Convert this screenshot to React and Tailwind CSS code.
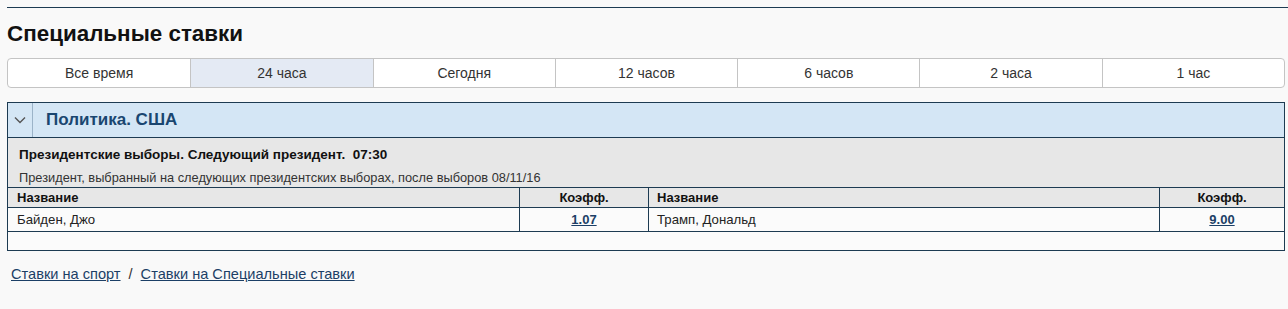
export default function App() {
  const tabs = ["Все время", "24 часа", "Сегодня", "12 часов", "6 часов", "2 часа", "1 час"];
  return (
    <div className="min-h-[309px] bg-[#f9f9f9] pt-[7px] pl-[7px] pr-[3px] text-[#222]" style={{ fontFamily: '"Liberation Sans", Arial, sans-serif' }}>
      <div className="h-px bg-[#1d3b52] -mr-[3px]"></div>
      <h1 className="mt-[13px] text-[22.4px] font-bold leading-[26px] text-[#111]">Специальные ставки</h1>
      <div className="mt-[11px] grid grid-cols-7 rounded-[4px] border border-[#c4c4c4] bg-white h-[30px] overflow-hidden">
        {tabs.map((t, i) => (
          <div key={t} className={`flex items-center justify-center text-[14px] text-[#333] ${i > 0 ? "border-l border-[#c4c4c4]" : ""} ${i === 1 ? "bg-[#e4eaf4]" : ""}`}>
            {t}
          </div>
        ))}
      </div>
      <div className="mt-[14px] border border-[#1d3b52]">
        <div className="flex h-[35px] bg-[#d4e6f5] border-b border-[#1d3b52]">
          <div className="w-[25px] flex items-center justify-center border-r border-[#9bb3c8]">
            <svg width="12" height="8" viewBox="0 0 12 8" fill="none" stroke="#555" strokeWidth="1.4">
              <path d="M1 1.5 L6 6.5 L11 1.5" />
            </svg>
          </div>
          <div className="flex items-center pl-[13px] text-[17px] font-bold text-[#1a4670]">Политика. США</div>
        </div>
        <div className="bg-[#e7e7e7] px-[11px] pt-[8px] h-[50px] border-b border-[#1d3b52]">
          <div className="text-[13.5px] font-bold leading-[18px] text-[#111]">Президентские выборы. Следующий президент.&nbsp; 07:30</div>
          <div className="mt-[5px] text-[12.8px] leading-[17px] text-[#333]">Президент, выбранный на следующих президентских выборах, после выборов 08/11/16</div>
        </div>
        <div className="grid grid-cols-[512px_129px_511px_1fr]">
          <div className="h-[20px] bg-[#e7e7e7] border-b border-r border-[#1d3b52] pl-[9px] text-[13px] font-bold leading-[20px] text-[#111]">Название</div>
          <div className="h-[20px] bg-[#e7e7e7] border-b border-r border-[#1d3b52] text-center text-[13px] font-bold leading-[20px] text-[#111]">Коэфф.</div>
          <div className="h-[20px] bg-[#e7e7e7] border-b border-r border-[#1d3b52] pl-[8px] text-[13px] font-bold leading-[20px] text-[#111]">Название</div>
          <div className="h-[20px] bg-[#e7e7e7] border-b border-[#1d3b52] text-center text-[13px] font-bold leading-[20px] text-[#111]">Коэфф.</div>
          <div className="h-[24px] bg-[#fbfbfb] border-b border-r border-[#1d3b52] pl-[9px] text-[13.2px] leading-[23px] text-[#222]">Байден, Джо</div>
          <div className="h-[24px] bg-[#fbfbfb] border-b border-r border-[#1d3b52] text-center text-[13px] font-bold leading-[23px]"><a href="#" className="text-[#1c3f66] underline">1.07</a></div>
          <div className="h-[24px] bg-[#fbfbfb] border-b border-r border-[#1d3b52] pl-[8px] text-[13.2px] leading-[23px] text-[#222]">Трамп, Дональд</div>
          <div className="h-[24px] bg-[#fbfbfb] border-b border-[#1d3b52] text-center text-[13px] font-bold leading-[23px]"><a href="#" className="text-[#1c3f66] underline">9.00</a></div>
        </div>
        <div className="h-[18px] bg-[#fbfbfb]"></div>
      </div>
      <div className="mt-[14px] pl-[4px] text-[14.6px] leading-[18px] text-[#333]">
        <a href="#" className="text-[#1c3f66] underline">Ставки на спорт</a>
        <span className="mx-[8px]">/</span>
        <a href="#" className="text-[#1c3f66] underline">Ставки на Специальные ставки</a>
      </div>
    </div>
  );
}
